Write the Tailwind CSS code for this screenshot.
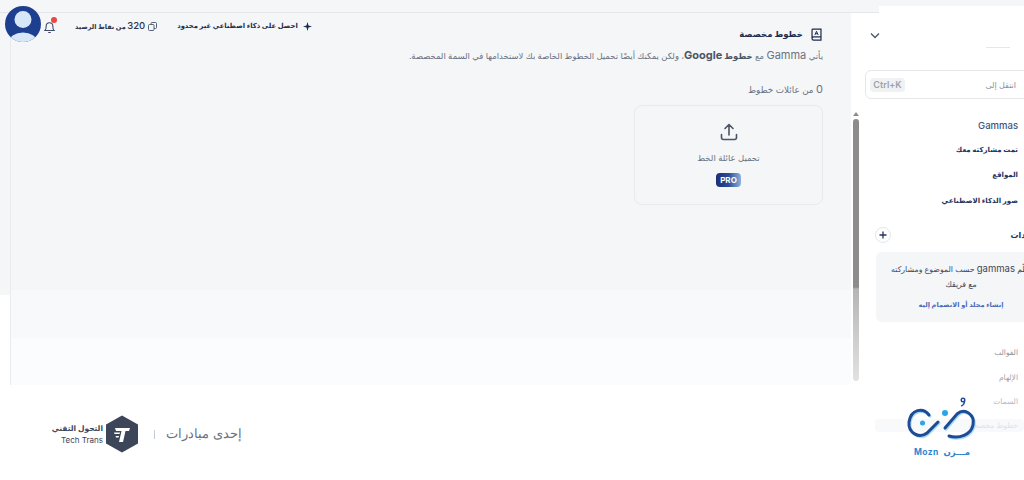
<!doctype html>
<html lang="ar">
  <head>
    <meta charset="UTF-8" />
    <title>Gamma</title>
    <script src="https://cdn.jsdelivr.net/npm/@tailwindcss/browser@4"></script>
  </head>
  <body class="relative w-[1024px] h-[480px] overflow-hidden bg-white font-['Inter','DejaVu_Sans',sans-serif] text-[#2b3450]">
    <div class="flex h-full">
      <!-- left column -->
      <div class="w-[851px] flex flex-col">
        <div class="flex h-[385px]">
          <div class="w-[10px] h-[295px] bg-[#f5f6f8]"></div>
          <main dir="rtl" class="w-[841px] mt-[12px] pt-[14px] pr-[28px] border-l border-[#e9ebef] bg-[linear-gradient(to_bottom,#f5f6f8_0,#f5f6f8_278px,#f8f9fb_278px,#f8f9fb_326px,#fbfcfd_326px,#fbfcfd_100%)]">
            <div class="flex items-center gap-[7px] h-[16px]">
              <svg class="w-[13px] h-[13px]" viewBox="0 0 16 16" fill="none" stroke="#1f2b4d" stroke-width="1.500">
                <path d="M2.500 12.500V2.500a1 1 0 0 1 1-1h10v13.500h-9a2 2 0 0 1-2-2a2 2 0 0 1 2-2h9" />
                <path d="M6 8.500l2-4.500l2 4.500M6.800 7h2.400" stroke-width="1.200" />
              </svg>
              <h1 class="text-[8.500px] font-bold text-[#1f2b4d]">خطوط مخصصة</h1>
            </div>
            <p class="mt-[6px] text-[8.450px] leading-[14px] text-[#6b7280]">يأتي <span class="text-[11px]">Gamma</span> مع <b class="text-[#4b5563]">خطوط <span class="text-[11px]">Google</span></b>، ولكن يمكنك أيضًا تحميل الخطوط الخاصة بك لاستخدامها في السمة المخصصة.</p>
            <p class="mt-[19px] text-[8.800px] leading-[14px] text-[#6b7280]"><span class="text-[11px]">0</span> من عائلات خطوط</p>
            <div class="mt-[8px] w-[189px] h-[100px] rounded-lg border border-[#e8eaef] flex flex-col items-center pt-[16px]">
              <svg class="w-[20px] h-[20px]" viewBox="0 0 20 20" fill="none" stroke="#4b5563" stroke-width="1.600" stroke-linecap="round" stroke-linejoin="round">
                <path d="M10 13V2.500M6 6.500l4-4l4 4M2.500 12.500v3a2 2 0 0 0 2 2h11a2 2 0 0 0 2-2v-3" />
              </svg>
              <p class="mt-[9px] text-[8.500px] leading-[14px] text-[#6b7280]">تحميل عائلة الخط</p>
              <span class="mt-[8px] w-[25px] h-[14px] rounded-[4px] bg-gradient-to-r from-[#1c2f74] via-[#2a4c95] to-[#8fb2dc] text-white text-[8px] font-bold leading-[14px] text-center">PRO</span>
            </div>
          </main>
        </div>
        <!-- footer -->
        <footer class="flex items-center h-[95px] pt-[3px] pl-[53px]">
          <div class="w-[50px] flex flex-col items-end">
            <p class="text-[7.500px] leading-[12px] font-bold text-[#3d4558] whitespace-nowrap" dir="rtl">التحول التقني</p>
            <p class="text-[8px] leading-[11px] text-[#3d4558] whitespace-nowrap">Tech Trans</p>
          </div>
          <svg class="ml-[2px] w-[34px] h-[38px]" viewBox="0 0 34 38">
            <path d="M17 0.500L33 9.500V28.500L17 37.500L1 28.500V9.500Z" fill="#3d4558" />
            <path d="M10 13H25L24 16H20.500L18 27H14L16.500 16H11ZM9 17.500H15L14.600 19H9.500ZM10.500 21H14L13.600 22.500H11Z" fill="#fff" />
          </svg>
          <div class="ml-[15px] w-px h-[9px] bg-[#c3ccd8]"></div>
          <p dir="rtl" class="ml-[14px] w-[73px] text-[12.500px] font-light text-[#6b7280] whitespace-nowrap">إحدى مبادرات</p>
        </footer>
      </div>

      <!-- scrollbar + sidebar -->
      <aside dir="rtl" class="relative z-10 w-[173px] h-[432px] overflow-hidden bg-white">
        <div class="absolute left-[2px] top-[112px] w-[6px] flex flex-col items-center">
          <div class="w-0 h-0 border-x-[3px] border-x-transparent border-b-[4px] border-b-[#8c8c8c]"></div>
          <div class="mt-[3px] w-[6px] h-[262px] rounded-full bg-[linear-gradient(to_bottom,#8c8c8c_0,#8c8c8c_168px,#b5b5b5_170px,#e2e2e2_100%)]"></div>
        </div>
        <div class="pt-[32px] pl-[19px] flex justify-end">
          <svg class="w-[10px] h-[7px]" viewBox="0 0 10 7" fill="none" stroke="#4b5563" stroke-width="1.300"><path d="M1 1.500l4 4l4-4" /></svg>
        </div>
        <div class="mt-[8px] mr-[14px] w-[24px] h-px bg-[#e5e7eb]"></div>
        <div class="mt-[22px] mr-[-20px] w-[179px] h-[29px] rounded-md border border-[#e5e7eb] flex items-center justify-between pr-[27px] pl-[4px]">
          <span class="text-[8px] text-[#8b919b]">انتقل إلى</span>
          <span class="h-[14px] w-[35px] rounded bg-[#f0f1f3] text-[9px] font-semibold leading-[14px] text-center text-[#9ca3af]">Ctrl+K</span>
        </div>
        <nav class="mt-[20px] pr-[6px] flex flex-col items-start text-[7px] font-bold text-[#24325c] whitespace-nowrap">
          <a class="h-[14px] leading-[14px] text-[9.500px] font-medium text-[#3a5480]">Gammas</a>
          <a class="mt-[10px] h-[14px] leading-[14px]">تمت مشاركته معك</a>
          <a class="mt-[11px] h-[14px] leading-[14px]">المواقع</a>
          <a class="mt-[12px] h-[14px] leading-[14px]">صور الذكاء الاصطناعي</a>
        </nav>
        <div class="mt-[19px] flex items-center justify-between h-[16px] mr-[-22px] pl-[24px]">
          <span class="text-[8px] font-bold text-[#24325c] whitespace-nowrap">المجلدات</span>
          <span class="w-[16px] h-[16px] rounded-full border border-[#e1e6f0] flex items-center justify-center">
            <svg class="w-[8px] h-[8px]" viewBox="0 0 8 8" stroke="#24325c" stroke-width="1.300"><path d="M4 0.500v7M0.500 4h7" /></svg>
          </span>
        </div>
        <div class="mt-[9px] mr-[-22px] w-[170px] h-[70px] rounded-md bg-[#f5f6f8] pt-[9px] text-center">
          <p class="text-[7.800px] leading-[15px] text-[#3f4757] whitespace-nowrap">نظّم <span class="text-[9.500px]">gammas</span> حسب الموضوع ومشاركته<br />مع فريقك</p>
          <p class="mt-[6px] text-[6.600px] leading-[14px] font-semibold text-[#4a6cb8] whitespace-nowrap">إنشاء مجلد أو الانضمام إليه</p>
        </div>
        <div class="mt-[24px] pr-[6px] flex flex-col items-start text-[7.500px] whitespace-nowrap">
          <a class="h-[14px] leading-[14px] text-[#8b919b]">القوالب</a>
          <a class="mt-[11px] h-[14px] leading-[14px] text-[#a0a5ae]">الإلهام</a>
          <a class="mt-[10px] h-[14px] leading-[14px] text-[#b4b8c0]">السمات</a>
        </div>
        <div class="mt-[10px] ml-[24px] h-[13px] bg-[#f8f9fb] pr-[6px] text-[7.500px] leading-[13px] text-[#dfe2e7] whitespace-nowrap rounded-sm">خطوط مخصصة</div>
      </aside>
    </div>

    <!-- top strips, run under the sidebar corner -->
    <div class="absolute top-0 left-0 w-full h-[6px] bg-[#f5f6f8] z-20"></div>
    <div class="absolute top-0 left-0 w-[879px] h-[13px] bg-[#f5f6f8] border-b border-[#e4e6ea] z-20"></div>

    <!-- header actions, overlap the panel -->
    <header class="absolute z-30 top-[6px] left-[5px] flex items-center">
      <svg class="w-[37px] h-[36px]" viewBox="0 0 37 36">
        <defs><clipPath id="avatarClip"><path d="M0 18a18 18 0 0 1 36 0a18 18 0 0 1-36 0z" /></clipPath></defs>
        <g clip-path="url(#avatarClip)">
          <rect width="37" height="36" fill="#1e3f8f" />
          <circle cx="18" cy="13.500" r="8.500" fill="#d8e7f8" />
          <ellipse cx="18" cy="36" rx="14" ry="9.500" fill="#d8e7f8" />
        </g>
      </svg>
      <span class="relative ml-[1px] mt-[6px] w-[13px] h-[14px]">
        <svg class="w-[13px] h-[14px]" viewBox="0 0 13 14" fill="none" stroke="#3f4a66" stroke-width="1.100">
          <path d="M2 10.500c1-1 1.200-2.500 1.200-4.500a3.300 3.300 0 0 1 6.600 0c0 2 .2 3.500 1.200 4.500zM5.200 12.500h2.600" />
        </svg>
        <span class="absolute -top-[3px] left-[8px] w-[6px] h-[6px] rounded-full bg-[#ef4444]"></span>
      </span>
      <span dir="rtl" class="ml-[19px] mt-[4px] flex items-center gap-[3px] text-[6.500px] font-bold text-[#2b3450] whitespace-nowrap">
        <svg class="w-[9px] h-[9px]" viewBox="0 0 9 9" fill="none" stroke="#5a6478" stroke-width="1"><rect x="3" y="0.500" width="5.500" height="6" rx="1" /><rect x="0.500" y="2.500" width="5.500" height="6" rx="1" fill="#f5f6f8" /></svg>
        <span><span class="text-[9.500px] font-medium">320</span> من نقاط الرصيد</span>
      </span>
      <span dir="rtl" class="ml-[20px] mt-[4px] flex items-center gap-[5px] text-[6.800px] font-bold text-[#1f2b4d] whitespace-nowrap">
        <svg class="w-[9px] h-[9px]" viewBox="0 0 9 9" fill="#1f2b4d"><path d="M4.500 0L5.500 3.500L9 4.500L5.500 5.500L4.500 9L3.500 5.500L0 4.500L3.500 3.500Z" /></svg>
        احصل على ذكاء اصطناعي غير محدود
      </span>
    </header>

    <!-- Mozn logo sits over the sidebar and footer -->
    <div class="absolute z-30 left-[905px] top-[395px] w-[72px] flex flex-col items-center">
      <svg class="w-[72px] h-[48px]" viewBox="0 0 72 48" fill="none" stroke-linecap="round">
        <g stroke="#a5dcf5" stroke-width="3" transform="translate(1 1.200)">
          <path d="M24 20C18 12 6 14 4 27C3 38 14 44 22 38L33 27" />
          <path d="M40 33L52 19C60 12 70 20 68 30C66 40 54 44 44 41" />
        </g>
        <g stroke="#1f4a96" stroke-width="3">
          <path d="M24 20C18 12 6 14 4 27C3 38 14 44 22 38L33 27" />
          <path d="M40 33L52 19C60 12 70 20 68 30C66 40 54 44 44 41" />
        </g>
        <circle cx="17.500" cy="28" r="2.500" fill="#2aa5e8" />
        <circle cx="40" cy="18" r="3" fill="#2aa5e8" />
        <circle cx="58" cy="5" r="1.800" stroke="#1f4a96" stroke-width="1.400" />
        <path d="M59.500 6c0 2.500-1 4-3 4.800" stroke="#1f4a96" stroke-width="1.400" />
      </svg>
      <div class="mt-[3px] w-full flex justify-between items-center pl-[9px] pr-[7px] text-[#2f86d0] font-bold whitespace-nowrap">
        <span class="text-[8.500px] tracking-[0.4px]">Mozn</span>
        <span dir="rtl" class="text-[8.500px]">مـــزن</span>
      </div>
    </div>
  </body>
</html>
